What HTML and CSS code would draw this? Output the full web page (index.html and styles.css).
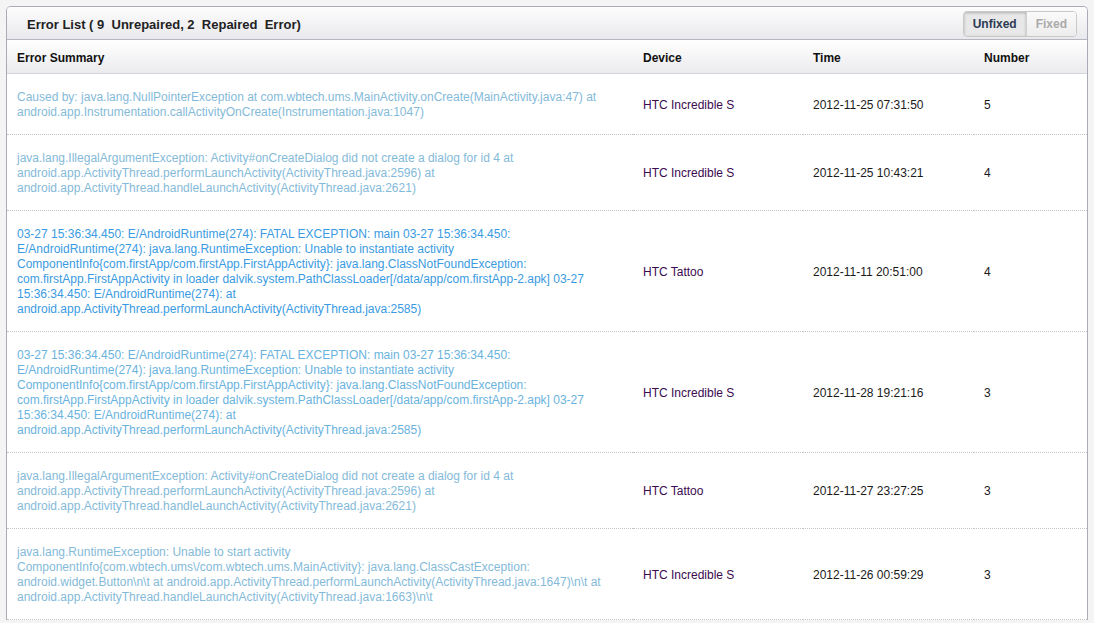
FILE: index.html
```html
<!DOCTYPE html>
<html>
<head>
<meta charset="utf-8">
<link rel="stylesheet" href="styles.css">
</head>
<body>

<div class="box">
  <div class="box-head">
    <h2>Error List ( 9&nbsp; Unrepaired, 2&nbsp; Repaired&nbsp; Error)</h2>
    <div class="toggle">
      <a href="#" class="active">Unfixed</a>
      <a href="#">Fixed</a>
    </div>
  </div>

  <table class="errors">
    <thead>
      <tr>
        <th class="c-summary">Error Summary</th>
        <th class="c-device">Device</th>
        <th class="c-time">Time</th>
        <th class="c-num">Number</th>
      </tr>
    </thead>
    <tbody>
      <tr>
        <td><a href="#" class="visited">Caused by: java.lang.NullPointerException at com.wbtech.ums.MainActivity.onCreate(MainActivity.java:47) at android.app.Instrumentation.callActivityOnCreate(Instrumentation.java:1047)</a></td>
        <td class="device">HTC Incredible S</td>
        <td>2012-11-25 07:31:50</td>
        <td>5</td>
      </tr>
      <tr>
        <td><a href="#" class="visited">java.lang.IllegalArgumentException: Activity#onCreateDialog did not create a dialog for id 4 at android.app.ActivityThread.performLaunchActivity(ActivityThread.java:2596) at android.app.ActivityThread.handleLaunchActivity(ActivityThread.java:2621)</a></td>
        <td class="device">HTC Incredible S</td>
        <td>2012-11-25 10:43:21</td>
        <td>4</td>
      </tr>
      <tr>
        <td><a href="#" class="fresh">03-27 15:36:34.450: E/AndroidRuntime(274): FATAL EXCEPTION: main 03-27 15:36:34.450: E/AndroidRuntime(274): java.lang.RuntimeException: Unable to instantiate activity ComponentInfo{com.firstApp/com.firstApp.FirstAppActivity}: java.lang.ClassNotFoundException: com.firstApp.FirstAppActivity in loader dalvik.system.PathClassLoader[/data/app/com.firstApp-2.apk] 03-27 15:36:34.450: E/AndroidRuntime(274): at android.app.ActivityThread.performLaunchActivity(ActivityThread.java:2585)</a></td>
        <td class="device">HTC Tattoo</td>
        <td>2012-11-11 20:51:00</td>
        <td>4</td>
      </tr>
      <tr>
        <td><a href="#" class="mid">03-27 15:36:34.450: E/AndroidRuntime(274): FATAL EXCEPTION: main 03-27 15:36:34.450: E/AndroidRuntime(274): java.lang.RuntimeException: Unable to instantiate activity ComponentInfo{com.firstApp/com.firstApp.FirstAppActivity}: java.lang.ClassNotFoundException: com.firstApp.FirstAppActivity in loader dalvik.system.PathClassLoader[/data/app/com.firstApp-2.apk] 03-27 15:36:34.450: E/AndroidRuntime(274): at android.app.ActivityThread.performLaunchActivity(ActivityThread.java:2585)</a></td>
        <td class="device">HTC Incredible S</td>
        <td>2012-11-28 19:21:16</td>
        <td>3</td>
      </tr>
      <tr>
        <td><a href="#" class="visited">java.lang.IllegalArgumentException: Activity#onCreateDialog did not create a dialog for id 4 at android.app.ActivityThread.performLaunchActivity(ActivityThread.java:2596) at android.app.ActivityThread.handleLaunchActivity(ActivityThread.java:2621)</a></td>
        <td class="device">HTC Tattoo</td>
        <td>2012-11-27 23:27:25</td>
        <td>3</td>
      </tr>
      <tr>
        <td><a href="#" class="visited">java.lang.RuntimeException: Unable to start activity ComponentInfo{com.wbtech.ums\/com.wbtech.ums.MainActivity}: java.lang.ClassCastException: android.widget.Button\n\t at android.app.ActivityThread.performLaunchActivity(ActivityThread.java:1647)\n\t at android.app.ActivityThread.handleLaunchActivity(ActivityThread.java:1663)\n\t</a></td>
        <td class="device">HTC Incredible S</td>
        <td>2012-11-26 00:59:29</td>
        <td>3</td>
      </tr>
    </tbody>
  </table>
</div>

</body>
</html>
```

FILE: styles.css
```css
body {
  margin: 0;
  padding: 6px 6px 0 6px;
  background: #f4f4f4;
  font-family: 'Liberation Sans', Arial, sans-serif;
  font-size: 12px;
  color: #222;
}

.box {
  background: #fff;
  border: 1px solid #a9abb6;
  border-bottom: none;
  border-radius: 5px 5px 0 0;
  overflow: hidden;
}

.box-head {
  height: 32px;
  display: flex;
  align-items: center;
  justify-content: space-between;
  padding: 0 10px 0 20px;
  background: linear-gradient(#fdfdfd, #e9e9ed);
  border-bottom: 1px solid #b4b6c0;
}

.box-head h2 {
  margin: 2px 0 0 0;
  font-size: 13px;
  font-weight: bold;
  color: #222;
}

.toggle {
  display: flex;
  border: 1px solid #c9c9c9;
  border-radius: 4px;
  overflow: hidden;
  margin-top: 1px;
}

.toggle a {
  display: block;
  padding: 5px 9px 5px 9px;
  font-size: 12px;
  font-weight: bold;
  color: #aaa;
  text-decoration: none;
  background: linear-gradient(#fafafa, #ededed);
}

.toggle a.active {
  color: #2c3b55;
  background: #e8e8e8;
  box-shadow: inset 0 1px 3px rgba(0, 0, 0, 0.25);
  border-right: 1px solid #d0d0d0;
}

.errors {
  width: 100%;
  border-collapse: collapse;
  table-layout: fixed;
}

.errors th {
  height: 31px;
  padding: 2px 10px 0 10px;
  text-align: left;
  font-weight: bold;
  color: #111;
  background: linear-gradient(#ffffff, #ebebee);
  border-bottom: 1px solid #d3d5dc;
}

.c-summary { width: 606px; }
.c-device { width: 150px; }
.c-time { width: 151px; }

.errors td {
  padding: 16px 10px 14px 10px;
  line-height: 15px;
  vertical-align: middle;
  border-bottom: 1px dotted #c4c4c4;
  color: #1a1a1a;
}

.errors td:first-child {
  padding-right: 16px;
}

.errors td a {
  text-decoration: none;
}

.errors td a:hover {
  text-decoration: underline;
}

a.visited { color: #84bad9; }
a.mid { color: #6ab3de; }
a.fresh { color: #3a9be2; }

.device {
  color: #3b0a50 !important;
}
```
